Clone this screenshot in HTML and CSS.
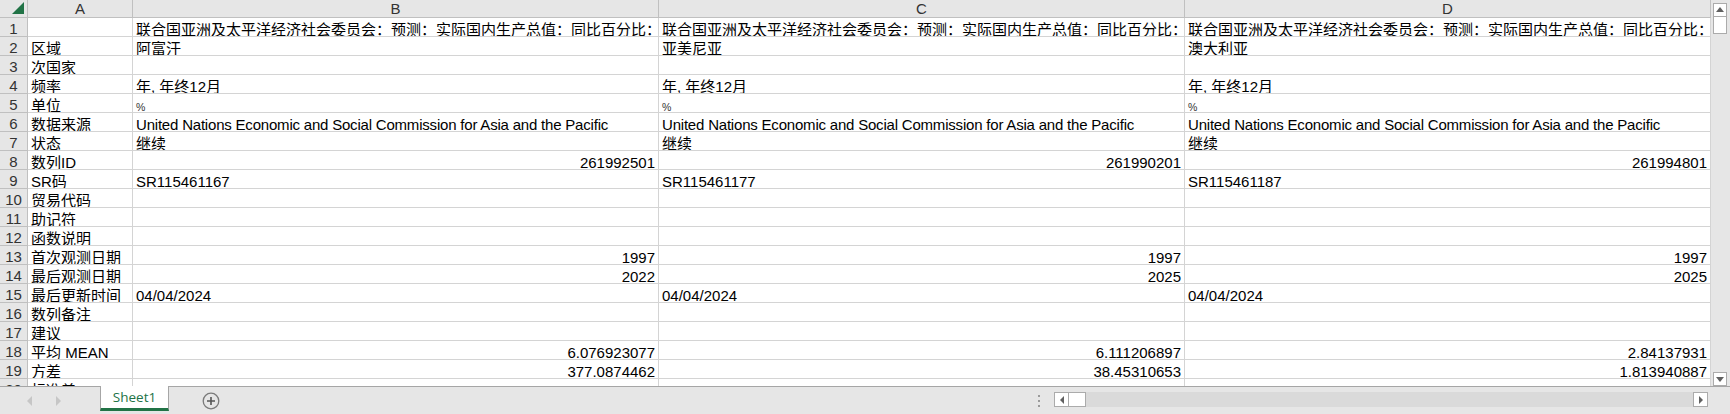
FILE: index.html
```html
<!DOCTYPE html>
<html lang="zh-CN">
<head>
    <meta charset="UTF-8">
    <title>Sheet1</title>
    <link rel="stylesheet" href="styles.css">
</head>
<body>

    <!-- Worksheet area: cells + vertical scrollbar -->
    <div class="sheet">
        <div class="grid" id="grid"></div>
        <div class="vscroll">
            <div class="sbtn"><span class="tri up"></span></div>
            <div class="vthumb"></div>
            <div class="vtrack"></div>
            <div class="sbtn"><span class="tri down"></span></div>
        </div>
    </div>

    <!-- Sheet tabs and horizontal scrollbar -->
    <div class="bar">
        <div class="nav">
            <span class="tri left light"></span>
            <span class="tri right light"></span>
        </div>
        <div class="tab">Sheet1</div>
        <div class="add">
            <svg width="18" height="18" viewBox="0 0 18 18">
                <circle cx="9" cy="9" r="7.8" fill="none" stroke="#7a7a7a" stroke-width="1.3"/>
                <path d="M9 5v8M5 9h8" stroke="#555" stroke-width="1.6"/>
            </svg>
        </div>
        <div class="split"><i></i><i></i><i></i></div>
        <div class="hscroll">
            <div class="sbtn wide"><span class="tri left"></span></div>
            <div class="hthumb"></div>
            <div class="htrack"></div>
            <div class="sbtn wide"><span class="tri right"></span></div>
        </div>
    </div>

    <script>
        // Sheet contents, one array per row (columns A-D)
        const title = '联合国亚洲及太平洋经济社会委员会：预测：实际国内生产总值：同比百分比：';
        const source = 'United Nations Economic and Social Commission for Asia and the Pacific';
        const rows = [
            ['', title + '阿富汗', title + '亚美尼亚', title + '澳大利亚'],
            ['区域', '阿富汗', '亚美尼亚', '澳大利亚'],
            ['次国家', '', '', ''],
            ['频率', '年, 年终12月', '年, 年终12月', '年, 年终12月'],
            ['单位', '%', '%', '%'],
            ['数据来源', source, source, source],
            ['状态', '继续', '继续', '继续'],
            ['数列ID', '261992501', '261990201', '261994801'],
            ['SR码', 'SR115461167', 'SR115461177', 'SR115461187'],
            ['贸易代码', '', '', ''],
            ['助记符', '', '', ''],
            ['函数说明', '', '', ''],
            ['首次观测日期', '1997', '1997', '1997'],
            ['最后观测日期', '2022', '2025', '2025'],
            ['最后更新时间', '04/04/2024', '04/04/2024', '04/04/2024'],
            ['数列备注', '', '', ''],
            ['建议', '', '', ''],
            ['平均 MEAN', '6.076923077', '6.111206897', '2.84137931'],
            ['方差', '377.0874462', '38.45310653', '1.813940887'],
            ['标准差', '19.41873957', '6.201056897', '1.346826227']
        ];

        const grid = document.getElementById('grid');

        function addCell(text, cls) {
            const div = document.createElement('div');
            div.className = 'cell ' + cls;
            div.textContent = text;
            grid.appendChild(div);
            return div;
        }

        // Column header row
        const corner = addCell('', 'head corner');
        corner.innerHTML = '<svg width="12" height="12" viewBox="0 0 12 12"><polygon points="12,0 12,12 0,12" fill="#217346"/></svg>';
        ['A', 'B', 'C', 'D'].forEach(c => addCell(c, 'head'));

        // Data rows
        rows.forEach((row, i) => {
            addCell(String(i + 1), 'head rownum');
            row.forEach(value => {
                let cls = 'data';
                if (/^[\d.]+$/.test(value)) cls += ' num';
                if (/^[A-Za-z ]{20,}$/.test(value)) cls += ' en';
                if (value === '%') cls += ' small';
                addCell(value, cls);
            });
        });
    </script>

</body>
</html>
```

FILE: styles.css
```css
body {
    margin: 0;
    width: 1730px;
    height: 414px;
    overflow: hidden;
    background: #fff;
    font-family: "Liberation Sans", "Noto Sans CJK SC", sans-serif;
    font-size: 15px;
    color: #000;
}
.sheet {
    display: flex;
    height: 386px;
}
.grid {
    width: 1711px;
    display: grid;
    grid-template-columns: 28px 105px 526px 526px 526px;
    grid-template-rows: 18px;
    grid-auto-rows: 19px;
    overflow: hidden;
}
.cell {
    box-sizing: border-box;
    border-right: 1px solid #d4d4d4;
    border-bottom: 1px solid #d4d4d4;
    padding: 0 3px;
    display: flex;
    align-items: flex-end;
    white-space: nowrap;
    overflow: hidden;
    line-height: 12px;
}
.en {
    letter-spacing: -0.2px;
}
.num {
    justify-content: flex-end;
}
.small {
    font-size: 10.5px;
    line-height: 10px;
    color: #333;
}
.head {
    background: #e6e6e6;
    border-color: #c0c0c0;
    justify-content: center;
    align-items: center;
    color: #333;
    padding: 0;
    line-height: 18px;
}
.rownum {
    padding-top: 3px;
}
.corner {
    justify-content: flex-end;
    align-items: flex-end;
    padding: 0 3px 3px 0;
}

/* scrollbars */
.vscroll {
    width: 19px;
    box-sizing: border-box;
    padding: 3px 3px 0 2px;
    background: #e6e6e6;
    display: flex;
    flex-direction: column;
}
.sbtn {
    height: 14px;
    box-sizing: border-box;
    background: #fff;
    border: 1px solid #ababab;
    display: flex;
    align-items: center;
    justify-content: center;
}
.vthumb {
    height: 17px;
    box-sizing: border-box;
    background: #fff;
    border: 1px solid #ababab;
    border-top: none;
}
.vtrack {
    flex: 1;
}
.tri {
    width: 0;
    height: 0;
    border: 4px solid transparent;
}
.tri.up {
    border-bottom: 5px solid #606060;
    border-top-width: 0;
    margin-top: -1px;
}
.tri.down {
    border-top: 5px solid #606060;
    border-bottom-width: 0;
}
.tri.left {
    border-right: 4px solid #606060;
    border-left-width: 0;
}
.tri.right {
    border-left: 4px solid #606060;
    border-right-width: 0;
}
.tri.light {
    border-width: 5px;
}
.tri.left.light {
    border-right: 5px solid #c6c6c6;
    border-left-width: 0;
}
.tri.right.light {
    border-left: 5px solid #c6c6c6;
    border-right-width: 0;
}

/* bottom bar */
.bar {
    height: 28px;
    box-sizing: border-box;
    border-top: 1px solid #a6a6a6;
    background: #e6e6e6;
    display: flex;
    align-items: flex-start;
}
.nav {
    width: 100px;
    height: 27px;
    display: flex;
    align-items: center;
    gap: 24px;
    padding-left: 27px;
    box-sizing: border-box;
}
.tab {
    width: 69px;
    height: 25px;
    margin-top: -1px;
    box-sizing: border-box;
    background: #fff;
    border-left: 1px solid #a6a6a6;
    border-right: 1px solid #a6a6a6;
    border-bottom: 3px solid #217346;
    color: #217346;
    font-family: "Open Sans", sans-serif;
    font-size: 13.5px;
    text-align: center;
    line-height: 22px;
}
.add {
    width: 84px;
    height: 27px;
    display: flex;
    align-items: center;
    justify-content: center;
}
.split {
    margin-left: auto;
    width: 16px;
    height: 27px;
    display: flex;
    flex-direction: column;
    align-items: center;
    justify-content: center;
    gap: 3px;
}
.split i {
    width: 2px;
    height: 2px;
    background: #9a9a9a;
}
.hscroll {
    width: 654px;
    height: 15px;
    margin: 5px 22px 0 7px;
    display: flex;
    background: #dadada;
}
.sbtn.wide {
    width: 15px;
    height: 15px;
}
.hthumb {
    width: 17px;
    box-sizing: border-box;
    background: #fff;
    border: 1px solid #ababab;
    border-left: none;
}
.htrack {
    flex: 1;
}
```
